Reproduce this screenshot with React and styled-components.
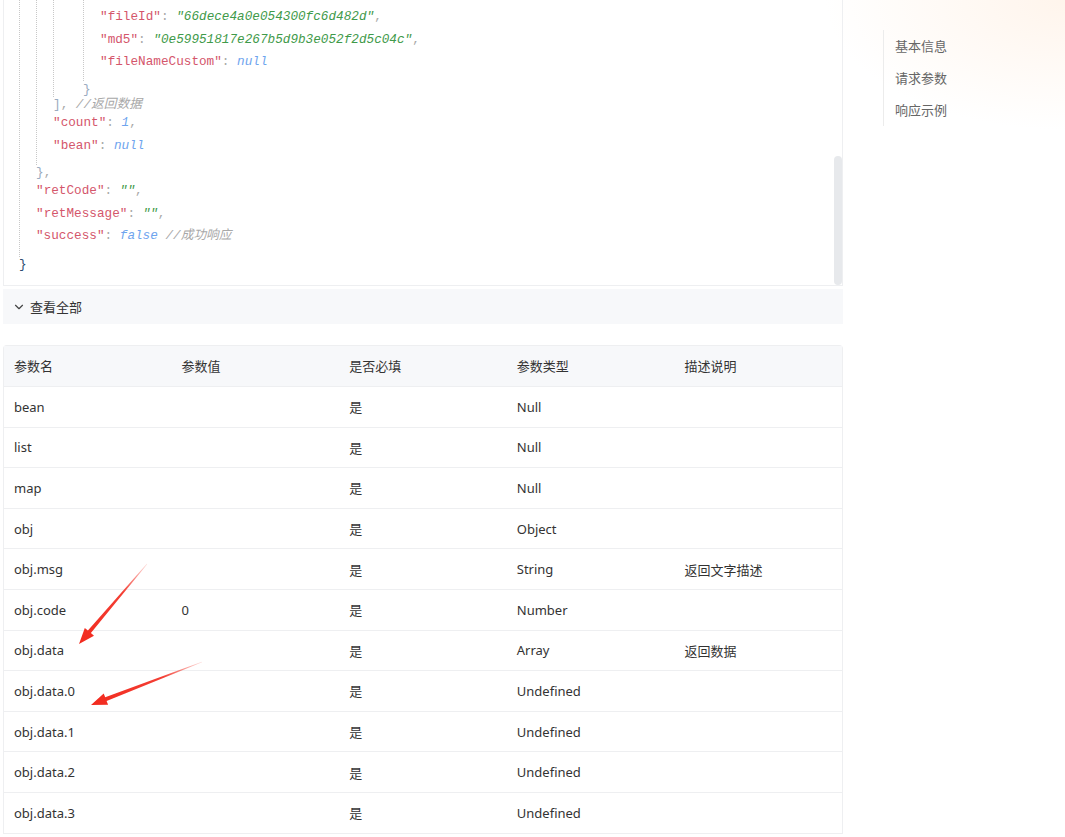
import React from 'react';
import styled, { createGlobalStyle } from 'styled-components';
import { ChevronDown } from 'lucide-react';

const GlobalStyle = createGlobalStyle`
  html, body {
    margin: 0;
    padding: 0;
    overflow: hidden;
  }

  body {
    background: #fff;
    font-family: "Noto Sans", "Noto Sans CJK SC", sans-serif;
    color: #333;
  }
`;

const Page = styled.div`
  position: relative;
  display: flex;
  align-items: flex-start;
  height: 837px;
  padding-left: 3px;
  background: radial-gradient(ellipse 240px 130px at 100% 0, rgba(255, 228, 205, 0.38), rgba(255, 255, 255, 0) 100%);
`;

const Main = styled.div`
  width: 840px;
  flex-shrink: 0;
`;

/* ---- code viewer ---- */

const CodeBlock = styled.div`
  position: relative;
  box-sizing: border-box;
  height: 286px;
  overflow: hidden;
  border: 1px solid #eeeff1;
  border-top: none;
  font-family: "Liberation Mono", "Noto Sans CJK SC", monospace;
  font-size: 12.7px;
`;

const Block = styled.div`
  margin-left: ${(p) => p.$ml || 0}px;
  padding-top: ${(p) => p.$pt || 0}px;
  padding-left: ${(p) => p.$pl || 0}px;
  padding-bottom: ${(p) => p.$pb || 0}px;
  border-left: 1px dotted #c8c8c8;
`;

const Line = styled.div`
  height: ${(p) => p.$h || 22.5}px;
  line-height: ${(p) => p.$h || 22.5}px;
  margin-top: ${(p) => p.$mt || 0}px;
  margin-left: ${(p) => p.$ml || 0}px;
  white-space: pre;
`;

const Key = styled.span`
  color: #d4566b;
`;

const Str = styled.span`
  color: #3f9a4a;
  font-style: italic;
`;

const Lit = styled.span`
  color: #6ea4ee;
  font-style: italic;
`;

const Punc = styled.span`
  color: #a9a9a9;
`;

const Brace = styled.span`
  color: ${(p) => (p.$root ? '#2d4b6e' : '#9aabc0')};
`;

const Comment = styled.span`
  color: #a8a8a8;
  font-style: italic;
`;

const Scrollbar = styled.div`
  position: absolute;
  right: 0;
  top: 156px;
  bottom: 0;
  width: 8px;
  border-radius: 4px;
  background: #e7e9ec;
`;

/* ---- view all bar ---- */

const ViewAll = styled.div`
  display: flex;
  align-items: center;
  gap: 4px;
  height: 35px;
  margin-top: 3px;
  padding-left: 9px;
  background: #f7f8fa;
  font-size: 13px;
  color: #333;

  svg {
    color: #444;
  }
`;

/* ---- table ---- */

const Table = styled.table`
  width: 840px;
  margin-top: 21px;
  border-collapse: separate;
  border-spacing: 0;
  table-layout: fixed;
  border: 1px solid #eeeff1;
  border-bottom: none;
  border-radius: 4px 4px 0 0;
  font-size: 13px;
  color: #333;
`;

const Th = styled.th`
  box-sizing: border-box;
  height: 41px;
  padding: 0 0 2px 10px;
  text-align: left;
  font-weight: 400;
  background: #f7f8fa;
  border-bottom: 1px solid #eeeff1;
`;

const Td = styled.td`
  height: 39.6px;
  padding: 0 0 0 10px;
  border-bottom: 1px solid #eeeff1;
`;

/* ---- side nav ---- */

const Aside = styled.nav`
  margin-left: 40px;
  margin-top: 30px;
  padding-left: 11px;
  border-left: 1px solid #ececec;
  display: flex;
  flex-direction: column;
`;

const NavItem = styled.div`
  height: 32px;
  line-height: 32px;
  font-size: 13px;
  color: #666;
`;

const Arrows = styled.svg`
  position: absolute;
  left: 0;
  top: 0;
  pointer-events: none;
`;

const rows = [
  ['bean', '', '是', 'Null', ''],
  ['list', '', '是', 'Null', ''],
  ['map', '', '是', 'Null', ''],
  ['obj', '', '是', 'Object', ''],
  ['obj.msg', '', '是', 'String', '返回文字描述'],
  ['obj.code', '0', '是', 'Number', ''],
  ['obj.data', '', '是', 'Array', '返回数据'],
  ['obj.data.0', '', '是', 'Undefined', ''],
  ['obj.data.1', '', '是', 'Undefined', ''],
  ['obj.data.2', '', '是', 'Undefined', ''],
  ['obj.data.3', '', '是', 'Undefined', ''],
];

const Field = ({ name, children, last }) => (
  <Line>
    <Key>"{name}"</Key>
    <Punc>: </Punc>
    {children}
    {!last && <Punc>,</Punc>}
  </Line>
);

export default function App() {
  return (
    <>
      <GlobalStyle />
      <Page>
        <Main>
          <CodeBlock>
            <Block $ml={15} $pl={16} $pb={9}>
              <Block $pl={16} $pb={8}>
                <Block $pl={29}>
                  <Block $pl={16} $pt={6} $pb={7}>
                    <Field name="fileId"><Str>"66dece4a0e054300fc6d482d"</Str></Field>
                    <Field name="md5"><Str>"0e59951817e267b5d9b3e052f2d5c04c"</Str></Field>
                    <Field name="fileNameCustom" last><Lit>null</Lit></Field>
                  </Block>
                  <Line $h={15} $mt={1.5}><Brace>{'}'}</Brace></Line>
                </Block>
                <Line $h={15}>
                  <Brace>]</Brace><Punc>, </Punc><Comment>//返回数据</Comment>
                </Line>
                <Field name="count"><Lit>1</Lit></Field>
                <Field name="bean" last><Lit>null</Lit></Field>
              </Block>
              <Line $h={15}><Brace>{'}'}</Brace><Punc>,</Punc></Line>
              <Field name="retCode"><Str>""</Str></Field>
              <Field name="retMessage"><Str>""</Str></Field>
              <Line>
                <Key>"success"</Key><Punc>: </Punc><Lit>false</Lit>{' '}<Comment>//成功响应</Comment>
              </Line>
            </Block>
            <Line $h={15} $ml={15}><Brace $root>{'}'}</Brace></Line>
            <Scrollbar />
          </CodeBlock>

          <ViewAll>
            <ChevronDown size={14} strokeWidth={2} />
            <span>查看全部</span>
          </ViewAll>

          <Table>
            <thead>
              <tr>
                <Th>参数名</Th>
                <Th>参数值</Th>
                <Th>是否必填</Th>
                <Th>参数类型</Th>
                <Th>描述说明</Th>
              </tr>
            </thead>
            <tbody>
              {rows.map((r) => (
                <tr key={r[0]}>
                  {r.map((c, i) => (
                    <Td key={i}>{c}</Td>
                  ))}
                </tr>
              ))}
            </tbody>
          </Table>
        </Main>

        <Aside>
          <NavItem>基本信息</NavItem>
          <NavItem>请求参数</NavItem>
          <NavItem>响应示例</NavItem>
        </Aside>

        <Arrows width="1065" height="837" viewBox="0 0 1065 837">
          <defs>
            <linearGradient id="fade1" x1="147" y1="564" x2="79" y2="644" gradientUnits="userSpaceOnUse">
              <stop offset="0" stopColor="#f22a1e" stopOpacity="0.15" />
              <stop offset="0.35" stopColor="#f22a1e" stopOpacity="0.9" />
              <stop offset="1" stopColor="#f22a1e" />
            </linearGradient>
            <linearGradient id="fade2" x1="202" y1="662" x2="91" y2="705" gradientUnits="userSpaceOnUse">
              <stop offset="0" stopColor="#f22a1e" stopOpacity="0.15" />
              <stop offset="0.35" stopColor="#f22a1e" stopOpacity="0.9" />
              <stop offset="1" stopColor="#f22a1e" />
            </linearGradient>
          </defs>
          <polygon
            fill="url(#fade1)"
            points="147.2,564.2 90.9,633.1 94,635.7 79,644 84.8,627.9 87.9,630.5 146.8,563.8"
          />
          <polygon
            fill="url(#fade2)"
            points="202.1,662.3 106.6,701.1 108.1,704.8 91,705 103.7,693.6 105.2,697.3 201.9,661.7"
          />
        </Arrows>
      </Page>
    </>
  );
}
